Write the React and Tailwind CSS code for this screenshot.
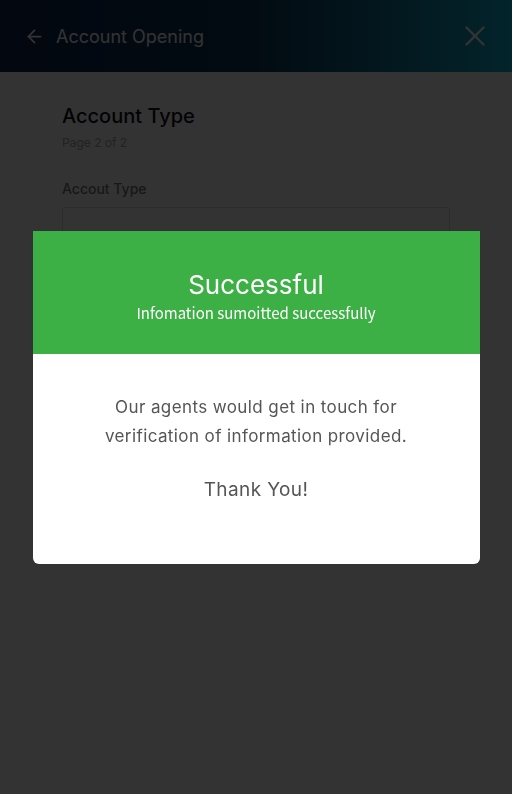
import { ArrowLeft, X } from 'lucide-react';

const Header = () => (
  <header className="h-[72px] flex items-center justify-between pl-[24px] pr-[20px] bg-gradient-to-r from-[#0b2350] via-[#0a3a5a] to-[#12b3d4] text-white">
    <div className="flex items-center gap-[11px]">
      <ArrowLeft size={21} strokeWidth={2} />
      <span className="text-[18px]">Account Opening</span>
    </div>
    <X size={34} strokeWidth={1.6} />
  </header>
);

const SuccessModal = () => (
  <div className="fixed inset-0 bg-black/80 flex items-center justify-center">
    <div className="w-[447px] rounded-b-[6px] overflow-hidden bg-white">
      <div className="h-[123px] bg-[#3cb044] flex flex-col items-center justify-center text-white pt-[9px]">
        <h2 className="text-[26px] leading-[32px]">Successful</h2>
        <p className="text-[15px] leading-[24px] font-['Noto_Sans_CJK_JP',sans-serif]">Infomation sumoitted successfully</p>
      </div>
      <div className="h-[210px] flex flex-col items-center pt-[39px] text-[#555] text-center">
        <p className="text-[17px] leading-[29px] tracking-[0.4px]">
          Our agents would get in touch for
          <br />
          verification of information provided.
        </p>
        <p className="text-[19px] mt-[25px] tracking-[0.4px]">Thank You!</p>
      </div>
    </div>
  </div>
);

export default function App() {
  return (
    <div className="min-h-[794px] bg-white font-['Inter',sans-serif]">
      <Header />
      <main className="px-[62px] pt-[30px]">
        <h1 className="text-[20px] font-medium text-[#111] leading-[28px]">Account Type</h1>
        <p className="text-[12px] text-[#aaa] mt-[4px]">Page 2 of 2</p>
        <label className="block text-[14px] font-medium text-[#777] mt-[26px]">Accout Type</label>
        <div className="mt-[8px] h-[44px] w-[388px] border border-[#ddd] rounded-[3px]" />
      </main>
      <SuccessModal />
    </div>
  );
}
